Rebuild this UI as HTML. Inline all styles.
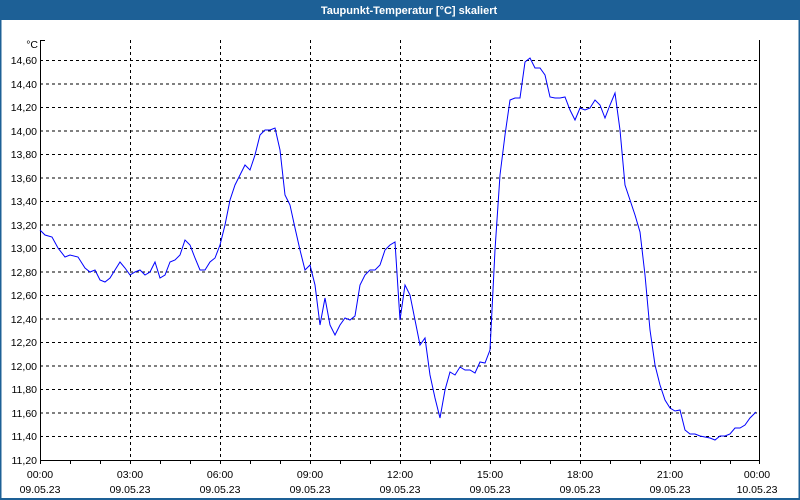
<!DOCTYPE html>
<html><head><meta charset="utf-8"><style>
html,body{margin:0;padding:0;background:#fff;}
svg{display:block;font-family:"Liberation Sans",sans-serif;}
</style></head><body>
<svg width="800" height="500" viewBox="0 0 800 500" xmlns="http://www.w3.org/2000/svg">
<rect x="0" y="0" width="800" height="500" fill="#fff"/>
<rect x="0" y="0" width="800" height="20" fill="#1d6096"/>
<rect x="0" y="0" width="1.5" height="500" fill="#1d6096"/>
<rect x="798.5" y="0" width="1.5" height="500" fill="#1d6096"/>
<rect x="0" y="498" width="800" height="2" fill="#1d6096"/>
<text x="409" y="14" fill="#fff" font-size="11" font-weight="bold" text-anchor="middle">Taupunkt-Temperatur [°C] skaliert</text>
<g stroke="#000" stroke-width="1" stroke-dasharray="3,3" fill="none" shape-rendering="crispEdges">
<line x1="40" y1="60.5" x2="760" y2="60.5"/><line x1="40" y1="84" x2="760" y2="84"/>
<line x1="40" y1="107.5" x2="760" y2="107.5"/><line x1="40" y1="131" x2="760" y2="131"/>
<line x1="40" y1="154.5" x2="760" y2="154.5"/><line x1="40" y1="178" x2="760" y2="178"/>
<line x1="40" y1="201.5" x2="760" y2="201.5"/><line x1="40" y1="225" x2="760" y2="225"/>
<line x1="40" y1="248.5" x2="760" y2="248.5"/><line x1="40" y1="272" x2="760" y2="272"/>
<line x1="40" y1="295.5" x2="760" y2="295.5"/><line x1="40" y1="319" x2="760" y2="319"/>
<line x1="40" y1="342.5" x2="760" y2="342.5"/><line x1="40" y1="366" x2="760" y2="366"/>
<line x1="40" y1="389.5" x2="760" y2="389.5"/><line x1="40" y1="413" x2="760" y2="413"/>
<line x1="40" y1="436.5" x2="760" y2="436.5"/>
<line x1="130.5" y1="40" x2="130.5" y2="460"/><line x1="220.5" y1="40" x2="220.5" y2="460"/>
<line x1="310.5" y1="40" x2="310.5" y2="460"/><line x1="400.5" y1="40" x2="400.5" y2="460"/>
<line x1="490.5" y1="40" x2="490.5" y2="460"/><line x1="580.5" y1="40" x2="580.5" y2="460"/>
<line x1="670.5" y1="40" x2="670.5" y2="460"/>
</g>
<g stroke="#000" stroke-width="1" fill="none" shape-rendering="crispEdges">
<line x1="40.5" y1="40" x2="40.5" y2="461"/>
<line x1="759.5" y1="40" x2="759.5" y2="461"/>
<line x1="40" y1="460.5" x2="760" y2="460.5"/>
<line x1="40" y1="40.5" x2="45" y2="40.5"/>
<path d="M40.5 461v3M70.5 461v3M100.5 461v3M130.5 461v3M160.5 461v3M190.5 461v3M220.5 461v3M250.5 461v3M280.5 461v3M310.5 461v3M340.5 461v3M370.5 461v3M400.5 461v3M430.5 461v3M460.5 461v3M490.5 461v3M520.5 461v3M550.5 461v3M580.5 461v3M610.5 461v3M640.5 461v3M670.5 461v3M700.5 461v3M730.5 461v3M759.5 461v3"/>
</g>
<g font-size="10.5" fill="#000" text-anchor="end">
<text x="38" y="48">°C</text>
<text x="37" y="64">14,60</text><text x="37" y="88">14,40</text><text x="37" y="111">14,20</text>
<text x="37" y="135">14,00</text><text x="37" y="158">13,80</text><text x="37" y="182">13,60</text>
<text x="37" y="205">13,40</text><text x="37" y="229">13,20</text><text x="37" y="252">13,00</text>
<text x="37" y="276">12,80</text><text x="37" y="299">12,60</text><text x="37" y="323">12,40</text>
<text x="37" y="346">12,20</text><text x="37" y="370">12,00</text><text x="37" y="393">11,80</text>
<text x="37" y="417">11,60</text><text x="37" y="440">11,40</text><text x="37" y="464">11,20</text>
</g>
<g font-size="10.5" fill="#000" text-anchor="middle">
<text x="40" y="478">00:00</text><text x="40" y="493">09.05.23</text>
<text x="130" y="478">03:00</text><text x="130" y="493">09.05.23</text>
<text x="220" y="478">06:00</text><text x="220" y="493">09.05.23</text>
<text x="310" y="478">09:00</text><text x="310" y="493">09.05.23</text>
<text x="400" y="478">12:00</text><text x="400" y="493">09.05.23</text>
<text x="490" y="478">15:00</text><text x="490" y="493">09.05.23</text>
<text x="580" y="478">18:00</text><text x="580" y="493">09.05.23</text>
<text x="670" y="478">21:00</text><text x="670" y="493">09.05.23</text>
<text x="757" y="478">00:00</text><text x="757" y="493">10.05.23</text>
</g>
<polyline fill="none" stroke="#0000ff" stroke-width="1" points="40,230 45,235 52,237 58,248 65,257 70,255 78,257 85,268 90,272 95,270 100,280 105,282 110,278 115,270 120,262 125,268 130,275 135,272 140,270 145,275 150,272 155,262 160,278 165,275 170,262 175,260 180,255 185,240 190,245 195,258 200,270 205,270 210,262 215,258 220,245 225,225 230,200 235,185 240,175 245,165 250,170 255,155 260,135 265,130 270,130 275,128 280,150 285,195 290,205 295,228 300,250 305,270 310,265 315,285 320,325 325,298 330,325 335,335 340,325 345,318 350,320 355,316 360,285 365,275 370,270 375,270 380,265 385,250 390,245 395,242 400,320 405,285 410,295 415,320 420,345 425,338 430,375 435,398 440,418 445,390 450,372 455,375 460,367 465,370 470,370 475,373 480,362 485,363 490,350 495,250 500,175 505,135 510,100 515,98 520,98 525,62 530,58 535,68 540,68 545,75 550,97 555,98 560,98 565,97 570,110 575,120 580,108 585,110 590,108 595,100 600,105 605,118 610,105 615,93 620,130 625,185 630,200 635,215 640,232 645,275 650,330 655,365 660,385 665,400 670,408 675,411 680,410 685,430 690,434 695,434 700,436 705,437 710,438 715,440 720,436 725,436 730,434 735,428 740,428 745,425 750,418 756,412"/>
</svg>
</body></html>
